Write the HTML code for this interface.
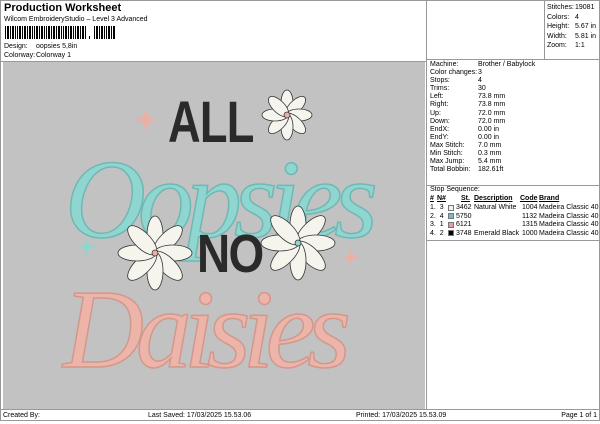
<!DOCTYPE html>
<html><head><style>
*{margin:0;padding:0;box-sizing:border-box}
body{width:600px;height:424px;background:#fff;font-family:"Liberation Sans",sans-serif;font-size:7px;color:#000;position:relative;overflow:hidden}
.a{position:absolute;white-space:nowrap}
.ln{position:absolute;background:#999}
</style></head><body>
<div class="ln" style="left:0;top:0;width:600px;height:1px"></div>
<div class="ln" style="left:0;top:0;width:1px;height:420px"></div>
<div class="ln" style="left:599px;top:0;width:1px;height:420px"></div>
<div class="a" style="left:4px;top:2px;font-size:11px;font-weight:bold">Production Worksheet</div>
<div class="a" style="left:4px;top:16px">Wilcom EmbroideryStudio – Level 3 Advanced</div>
<svg class="a" style="left:5px;top:26px" width="132" height="14">
<g fill="#000">
<rect x="0" y="0" width="1" height="13"/><rect x="2" y="0" width="2" height="13"/><rect x="5" y="0" width="1" height="13"/><rect x="7" y="0" width="2" height="13"/><rect x="10" y="0" width="1" height="13"/><rect x="12" y="0" width="1" height="13"/><rect x="14" y="0" width="2" height="13"/><rect x="17" y="0" width="1" height="13"/><rect x="19" y="0" width="2" height="13"/><rect x="22" y="0" width="1" height="13"/><rect x="24" y="0" width="2" height="13"/><rect x="27" y="0" width="1" height="13"/><rect x="29" y="0" width="1" height="13"/><rect x="31" y="0" width="2" height="13"/><rect x="34" y="0" width="1" height="13"/><rect x="36" y="0" width="2" height="13"/><rect x="39" y="0" width="1" height="13"/><rect x="41" y="0" width="1" height="13"/><rect x="43" y="0" width="2" height="13"/><rect x="46" y="0" width="1" height="13"/><rect x="48" y="0" width="2" height="13"/><rect x="51" y="0" width="1" height="13"/><rect x="53" y="0" width="2" height="13"/><rect x="56" y="0" width="1" height="13"/><rect x="58" y="0" width="1" height="13"/><rect x="60" y="0" width="2" height="13"/><rect x="63" y="0" width="1" height="13"/><rect x="65" y="0" width="2" height="13"/><rect x="68" y="0" width="1" height="13"/><rect x="70" y="0" width="1" height="13"/><rect x="72" y="0" width="2" height="13"/><rect x="75" y="0" width="1" height="13"/><rect x="77" y="0" width="2" height="13"/><rect x="80" y="0" width="1" height="13"/><rect x="84" y="10" width="1" height="3"/><rect x="89" y="0" width="1" height="13"/><rect x="91" y="0" width="2" height="13"/><rect x="94" y="0" width="1" height="13"/><rect x="96" y="0" width="2" height="13"/><rect x="99" y="0" width="1" height="13"/><rect x="101" y="0" width="1" height="13"/><rect x="103" y="0" width="2" height="13"/><rect x="106" y="0" width="1" height="13"/><rect x="108" y="0" width="2" height="13"/>
</g></svg>
<div class="a" style="left:4px;top:43px">Design:</div><div class="a" style="left:36px;top:43px">oopsies 5,8in</div>
<div class="a" style="left:4px;top:52px">Colorway:</div><div class="a" style="left:36px;top:52px">Colorway 1</div>
<div class="ln" style="left:0;top:61px;width:427px;height:1px"></div>
<div class="a" style="left:3px;top:62px;width:422px;height:347px;background:#c2c2c2"></div>
<svg class="a" style="left:3px;top:62px" width="422" height="347">
<g font-family="Liberation Serif" font-style="italic">
<text transform="translate(165,80) scale(0.78,1)" font-family="Liberation Sans" font-style="normal" font-weight="bold" font-size="58" fill="#2a2a2a" letter-spacing="-1">ALL</text>
<text x="62" y="175" font-size="112" fill="#8fd6d1" stroke="#6fb8b3" stroke-width="1.5" letter-spacing="-8">Oopsies</text>
<text transform="translate(194,210) scale(0.85,1)" font-family="Liberation Sans" font-style="normal" font-weight="bold" font-size="54" fill="#2a2a2a" letter-spacing="-2">NO</text>
<text x="60" y="305" font-size="112" fill="#edb5aa" stroke="#d3978c" stroke-width="1.5" letter-spacing="-8">Daisies</text>
</g>
<g fill="#f5f5ee" stroke="#333" stroke-width="0.8">
<g transform="translate(284,53)"><ellipse rx="6" ry="13" cy="-12"/><ellipse rx="6" ry="13" cy="-12" transform="rotate(45)"/><ellipse rx="6" ry="13" cy="-12" transform="rotate(90)"/><ellipse rx="6" ry="13" cy="-12" transform="rotate(135)"/><ellipse rx="6" ry="13" cy="-12" transform="rotate(180)"/><ellipse rx="6" ry="13" cy="-12" transform="rotate(225)"/><ellipse rx="6" ry="13" cy="-12" transform="rotate(270)"/><ellipse rx="6" ry="13" cy="-12" transform="rotate(315)"/><circle r="3" fill="#eab0a6"/></g>
<g transform="translate(152,191)"><ellipse rx="8" ry="19" cy="-18"/><ellipse rx="8" ry="19" cy="-18" transform="rotate(45)"/><ellipse rx="8" ry="19" cy="-18" transform="rotate(90)"/><ellipse rx="8" ry="19" cy="-18" transform="rotate(135)"/><ellipse rx="8" ry="19" cy="-18" transform="rotate(180)"/><ellipse rx="8" ry="19" cy="-18" transform="rotate(225)"/><ellipse rx="8" ry="19" cy="-18" transform="rotate(270)"/><ellipse rx="8" ry="19" cy="-18" transform="rotate(315)"/><circle r="3" fill="#eab0a6"/></g>
<g transform="translate(295,181)"><ellipse rx="8" ry="19" cy="-18"/><ellipse rx="8" ry="19" cy="-18" transform="rotate(45)"/><ellipse rx="8" ry="19" cy="-18" transform="rotate(90)"/><ellipse rx="8" ry="19" cy="-18" transform="rotate(135)"/><ellipse rx="8" ry="19" cy="-18" transform="rotate(180)"/><ellipse rx="8" ry="19" cy="-18" transform="rotate(225)"/><ellipse rx="8" ry="19" cy="-18" transform="rotate(270)"/><ellipse rx="8" ry="19" cy="-18" transform="rotate(315)"/><circle r="3" fill="#8fd6d1"/></g>
</g>
<path d="M143 47 l3 8 8 3 -8 3 -3 8 -3 -8 -8 -3 8 -3z" fill="#eab0a6"/>
<path d="M84 176 l2 7 7 2 -7 2 -2 7 -2 -7 -7 -2 7 -2z" fill="#8fd6d1"/>
<path d="M348 186 l2 7 7 2 -7 2 -2 7 -2 -7 -7 -2 7 -2z" fill="#eab0a6"/>
</svg>
<div class="ln" style="left:426px;top:0;width:1px;height:409px"></div>
<div class="ln" style="left:544px;top:0;width:1px;height:59px"></div>
<div class="ln" style="left:427px;top:59px;width:173px;height:1px"></div>
<div class="a" style="left:547px;top:3px;line-height:9.5px">Stitches:<br>Colors:<br>Height:<br>Width:<br>Zoom:</div>
<div class="a" style="left:575px;top:3px;line-height:9.5px">19081<br>4<br>5.67 in<br>5.81 in<br>1:1</div>
<div class="a" style="left:430px;top:61px;line-height:8.1px">Machine:<br>Color changes:<br>Stops:<br>Trims:<br>Left:<br>Right:<br>Up:<br>Down:<br>EndX:<br>EndY:<br>Max Stitch:<br>Min Stitch:<br>Max Jump:<br>Total Bobbin:</div>
<div class="a" style="left:478px;top:61px;line-height:8.1px">Brother / Babylock<br>3<br>4<br>30<br>73.8 mm<br>73.8 mm<br>72.0 mm<br>72.0 mm<br>0.00 in<br>0.00 in<br>7.0 mm<br>0.3 mm<br>5.4 mm<br>182.61ft</div>
<div class="ln" style="left:427px;top:185px;width:173px;height:1px"></div>
<div class="a" style="left:430px;top:186px">Stop Sequence:</div>
<div class="a" style="left:430px;top:195px;font-weight:bold;text-decoration:underline">#</div>
<div class="a" style="left:437px;top:195px;font-weight:bold;text-decoration:underline">N#</div>
<div class="a" style="left:461px;top:195px;font-weight:bold;text-decoration:underline">St.</div>
<div class="a" style="left:474px;top:195px;font-weight:bold;text-decoration:underline">Description</div>
<div class="a" style="left:520px;top:195px;font-weight:bold;text-decoration:underline">Code</div>
<div class="a" style="left:539px;top:195px;font-weight:bold;text-decoration:underline">Brand</div>
<div class="a" style="left:430px;top:204px;line-height:8.5px">1.&nbsp;&nbsp;3<br>2.&nbsp;&nbsp;4<br>3.&nbsp;&nbsp;1<br>4.&nbsp;&nbsp;2</div>
<div class="a" style="left:448px;top:205px;width:6px;height:6px;background:#f0f0f0;border:1px solid #777"></div>
<div class="a" style="left:448px;top:213px;width:6px;height:6px;background:#7fb7c9;border:1px solid #777"></div>
<div class="a" style="left:448px;top:222px;width:6px;height:6px;background:#e89aa6;border:1px solid #777"></div>
<div class="a" style="left:448px;top:230px;width:6px;height:6px;background:#000;border:1px solid #777"></div>
<div class="a" style="left:456px;top:204px;line-height:8.5px">3462<br>5750<br>6121<br>3748</div>
<div class="a" style="left:474px;top:204px;line-height:8.5px">Natural White<br><br><br>Emerald Black</div>
<div class="a" style="left:522px;top:204px;line-height:8.5px">1004<br>1132<br>1315<br>1000</div>
<div class="a" style="left:539px;top:204px;line-height:8.5px">Madeira Classic 40<br>Madeira Classic 40<br>Madeira Classic 40<br>Madeira Classic 40</div>
<div class="ln" style="left:427px;top:240px;width:173px;height:1px"></div>
<div class="ln" style="left:0;top:409px;width:600px;height:1px"></div>
<div class="ln" style="left:0;top:420px;width:600px;height:1px"></div>
<div class="a" style="left:3px;top:412px">Created By:</div>
<div class="a" style="left:148px;top:412px">Last Saved: 17/03/2025 15.53.06</div>
<div class="a" style="left:356px;top:412px">Printed: 17/03/2025 15.53.09</div>
<div class="a" style="right:3px;top:412px">Page 1 of 1</div>
</body></html>
